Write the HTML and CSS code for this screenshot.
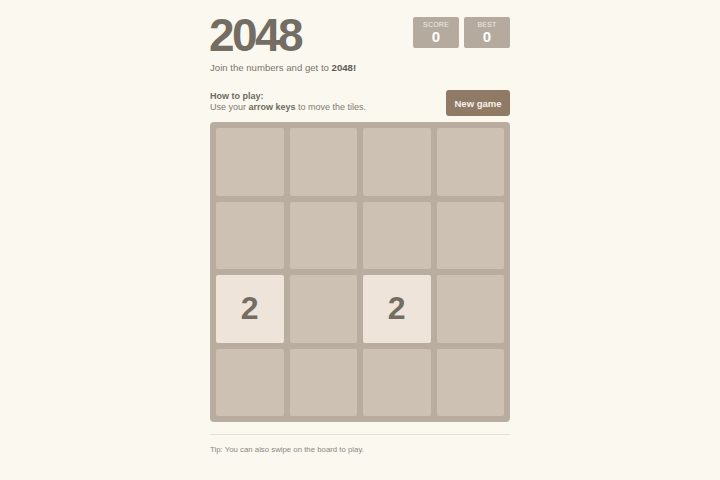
FILE: index.html
```html
<!DOCTYPE html>
<html>
<head>
<meta charset="utf-8">
<link rel="stylesheet" href="styles.css">
</head>
<body>
<div class="container">
  <div class="header">
    <h1 class="title">2048</h1>
    <div class="scores">
      <div class="score-box"><div class="label">SCORE</div><div class="value">0</div></div>
      <div class="score-box"><div class="label">BEST</div><div class="value">0</div></div>
    </div>
  </div>
  <p class="intro">Join the numbers and get to <strong>2048!</strong></p>
  <div class="controls">
    <div class="howto">
      <div class="howto-title">How to play:</div>
      <div>Use your <strong>arrow keys</strong> to move the tiles.</div>
    </div>
    <button class="new-game">New game</button>
  </div>
  <div class="board">
    <div class="cell"></div><div class="cell"></div><div class="cell"></div><div class="cell"></div>
    <div class="cell"></div><div class="cell"></div><div class="cell"></div><div class="cell"></div>
    <div class="cell tile-2">2</div><div class="cell"></div><div class="cell tile-2">2</div><div class="cell"></div>
    <div class="cell"></div><div class="cell"></div><div class="cell"></div><div class="cell"></div>
  </div>
  <hr class="divider">
  <p class="tip">Tip: You can also swipe on the board to play.</p>
</div>
</body>
</html>
```
FILE: styles.css
```css
* { box-sizing: border-box; }
html, body { margin: 0; padding: 0; }
body {
  background: #fbf8f0;
  font-family: "Liberation Sans", Arial, sans-serif;
  color: #776e65;
}
.container {
  width: 300px;
  margin: 0 auto;
  padding-top: 12px;
}
.header {
  display: flex;
  justify-content: space-between;
  align-items: flex-start;
}
.title {
  margin: 0 0 0 -1px;
  font-size: 46px;
  line-height: 46px;
  font-weight: bold;
  letter-spacing: -2.6px;
  color: #736d63;
}
.scores {
  display: flex;
  gap: 5px;
  margin-top: 5px;
}
.score-box {
  width: 46px;
  height: 31px;
  background: #b5aa9e;
  border-radius: 2px;
  text-align: center;
  color: #fff;
  padding-top: 4px;
}
.label {
  font-size: 7px;
  line-height: 8px;
  color: #f1ebe3;
  letter-spacing: 0.2px;
}
.value {
  font-size: 15px;
  font-weight: bold;
  line-height: 15px;
}
.intro {
  margin: 3px 0 0;
  font-size: 9.6px;
  line-height: 14px;
  color: #7b756d;
}
.intro strong { color: #5e5a54; }
.controls {
  display: flex;
  justify-content: space-between;
  align-items: flex-start;
  margin-top: 15px;
}
.howto {
  font-size: 9px;
  line-height: 11.5px;
  color: #7e7870;
  padding-top: 0.5px;
}
.howto-title { font-weight: bold; color: #6f6a62; }
.howto strong { color: #6f6a62; }
.new-game {
  background: #8f7a66;
  color: #f7f1ea;
  border: none;
  border-radius: 3px;
  width: 64px;
  height: 26px;
  font-family: "Liberation Sans", Arial, sans-serif;
  font-size: 9.5px;
  font-weight: bold;
  padding: 0;
}
.board {
  margin-top: 6px;
  width: 300px;
  height: 300px;
  background: #b9ada0;
  border-radius: 4px;
  padding: 6px;
  display: grid;
  grid-template-columns: repeat(4, 1fr);
  grid-template-rows: repeat(4, 1fr);
  gap: 6px;
}
.cell {
  background: #cdc1b4;
  border-radius: 2px;
  display: flex;
  align-items: center;
  justify-content: center;
  font-size: 32px;
  font-weight: bold;
  color: #736d63;
}
.tile-2 { background: #eee4da; }
.divider {
  border: none;
  border-top: 1px solid #e8e1d6;
  margin: 12px 0 0;
}
.tip {
  margin: 10px 0 0;
  font-size: 7.8px;
  line-height: 9px;
  color: #8b8680;
}
```
